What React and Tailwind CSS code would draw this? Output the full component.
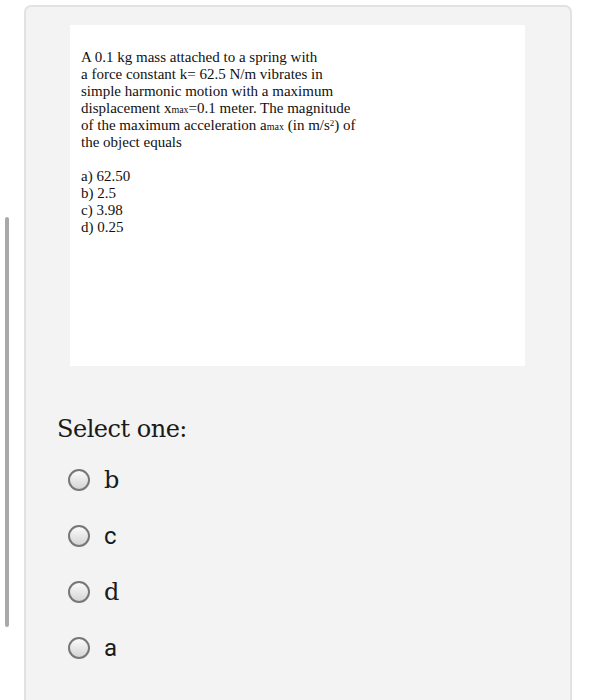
const options = [
  { label: "b", font: "font-['DejaVu_Serif',serif]" },
  { label: "c", font: "font-['Roboto',sans-serif]" },
  { label: "d", font: "font-['DejaVu_Serif',serif]" },
  { label: "a", font: "font-['Roboto',sans-serif]" },
];

export default function App() {
  return (
    <div className="relative w-[596px] h-[700px] overflow-hidden bg-white">
      {/* scrollbar */}
      <div className="absolute left-[5px] top-[217px] w-[4px] h-[410px] rounded-full bg-[#a9a9a9]" />

      <div className="ml-[24px] mt-[5px] w-[548px] h-[720px] rounded-[7px] border-2 border-[#e2e2e2] bg-[#f3f3f3] pt-[18px]">
        <div className="ml-[44px] w-[455px] h-[341px] bg-white pt-[24px] pl-[11px] font-['Liberation_Serif',serif] text-[15px] leading-[17px] text-[#111]">
          <p>A 0.1 kg mass attached to a spring with</p>
          <p>a force constant k= 62.5 N/m vibrates in</p>
          <p>simple harmonic motion with a maximum</p>
          <p>
            displacement x<span className="text-[10px] leading-none">max</span>=0.1 meter. The magnitude
          </p>
          <p>
            of the maximum acceleration a<span className="text-[10px] leading-none">max</span> (in m/s
            <sup className="text-[9px] leading-none">2</sup>) of
          </p>
          <p>the object equals</p>
          <div className="mt-[17px]">
            <p>a) 62.50</p>
            <p>b) 2.5</p>
            <p>c) 3.98</p>
            <p>d) 0.25</p>
          </div>
        </div>

        <div className="ml-[31px] mt-[48px] font-['DejaVu_Serif',serif] text-[24px] leading-[30px] text-[#1a1a1a] tracking-[-0.5px]">
          Select one:
        </div>

        <div className="ml-[42px] mt-[24px] flex flex-col gap-[32px]">
          {options.map((o) => (
            <div key={o.label} className="flex items-center gap-[14px] h-[24px]">
              <span className="w-[22px] h-[22px] rounded-full border-2 border-[#777] bg-gradient-to-b from-[#fbfbfb] to-[#d4d4d4]" />
              <span className={`${o.font} text-[24px] leading-[24px] text-[#1a1a1a]`}>{o.label}</span>
            </div>
          ))}
        </div>
      </div>
    </div>
  );
}
